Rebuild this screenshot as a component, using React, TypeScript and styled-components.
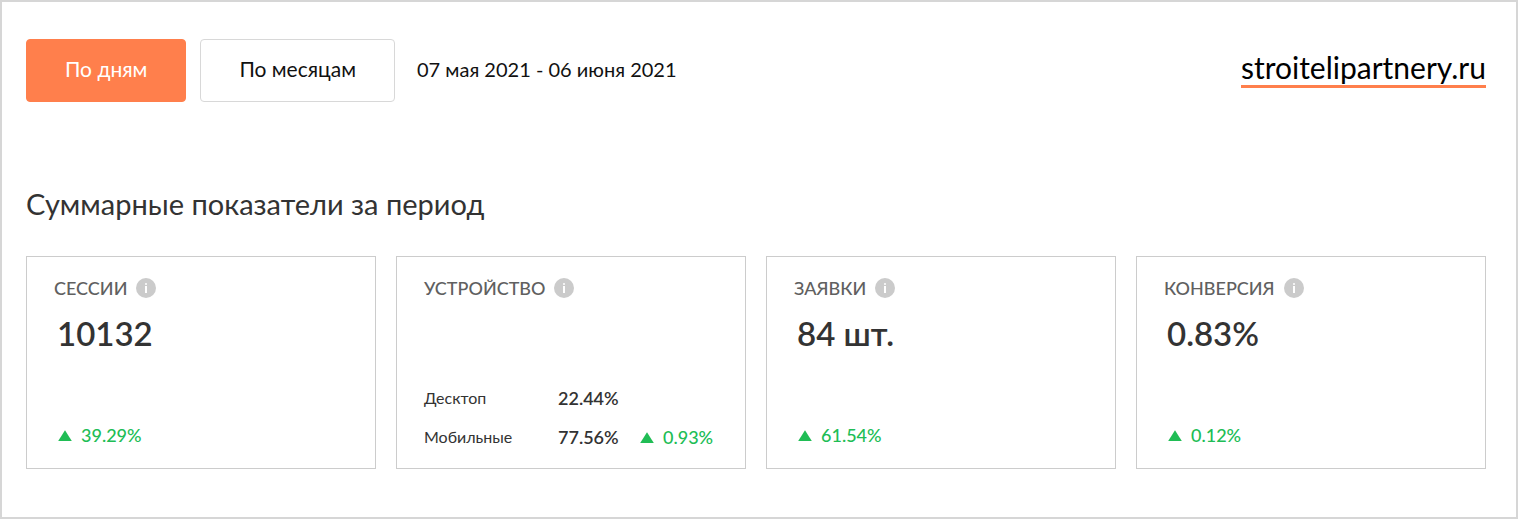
import React, { useState } from "react";
import styled, { createGlobalStyle } from "styled-components";

const GlobalStyle = createGlobalStyle`
  *, *::before, *::after { box-sizing: border-box; }
  body {
    margin: 0;
    background: #ffffff;
    color: #333333;
    font-family: Lato, "Open Sans", sans-serif;
  }
`;

const Page = styled.main`
  border: 2px solid #d6d6d6;
  padding: 37px 30px 48px 24px;
`;

const Toolbar = styled.header`
  display: flex;
  align-items: center;
  justify-content: space-between;
  gap: 20px;
`;

const Period = styled.div`
  display: flex;
  align-items: center;
  gap: 14px;
`;

const PeriodButton = styled.button<{ $active: boolean }>`
  height: 63px;
  padding: 0 38px 4px;
  border: 1px solid ${(p) => (p.$active ? "#ff7f4c" : "#d8d8d8")};
  border-radius: 4px;
  background: ${(p) => (p.$active ? "#ff7f4c" : "#ffffff")};
  color: ${(p) => (p.$active ? "#ffffff" : "#111111")};
  font: inherit;
  font-size: 21px;
  cursor: pointer;
`;

const Dates = styled.span`
  padding: 0 8px 4px;
  color: #111111;
  font-size: 20px;
`;

const SiteLink = styled.a`
  margin-bottom: 4px;
  border-bottom: 3px solid #ff7f4c;
  color: #000000;
  font-size: 30px;
  line-height: 36px;
  text-decoration: none;
`;

const Heading = styled.h2`
  margin: 82px 0 32px;
  font-size: 29px;
  font-weight: 400;
  line-height: 40px;
`;

const Cards = styled.section`
  display: grid;
  grid-template-columns: repeat(4, minmax(0, 1fr));
  gap: 20px;
`;

const Card = styled.article`
  display: flex;
  flex-direction: column;
  min-height: 213px;
  padding: 19px 27px;
  border: 1px solid #cccccc;
`;

const CardTitle = styled.h3`
  display: flex;
  align-items: center;
  gap: 9px;
  margin: 0;
  color: #606060;
  font-size: 18px;
  font-weight: 500;
  line-height: 24px;
  text-transform: uppercase;
`;

const Value = styled.strong`
  margin: 13px 3px 0;
  font-size: 33px;
  font-weight: 600;
  line-height: 40px;
`;

const Footer = styled.div`
  margin: auto 4px 0;
  padding-bottom: 2px;
`;

const Trend = styled.span`
  display: flex;
  align-items: center;
  gap: 9px;
  color: #20bd55;
  font-size: 18px;
  font-weight: 500;
  line-height: 24px;
`;

const Devices = styled.table`
  margin-top: auto;
  border-collapse: collapse;
  font-size: 18px;
  line-height: 24px;
`;

const DeviceRow = styled.tr`
  & + & > * { padding-top: 15px; }
`;

const DeviceName = styled.th`
  width: 134px;
  padding: 0;
  font-size: 16px;
  font-weight: 400;
  text-align: left;
`;

const DeviceCell = styled.td<{ $strong?: boolean }>`
  padding: 0;
  width: ${(p) => (p.$strong ? "82px" : "auto")};
  font-weight: ${(p) => (p.$strong ? 600 : 400)};
`;

const InfoIcon = () => (
  <svg width="20" height="20" viewBox="0 0 20 20" aria-hidden="true">
    <circle cx="10" cy="10" r="10" fill="#cbcbcb" />
    <rect x="9" y="5" width="2" height="2" rx="1" fill="#ffffff" />
    <rect x="9" y="8" width="2" height="7" fill="#ffffff" />
  </svg>
);

const Growth = ({ children }: { children: string }) => (
  <Trend>
    <svg width="14" height="11" viewBox="0 0 14 11" aria-hidden="true">
      <path d="M7 0.3 13.8 11H0.2Z" fill="#20bd55" />
    </svg>
    {children}
  </Trend>
);

const Metric = ({ title, value, growth }: { title: string; value: string; growth: string }) => (
  <Card>
    <CardTitle>{title}<InfoIcon /></CardTitle>
    <Value>{value}</Value>
    <Footer><Growth>{growth}</Growth></Footer>
  </Card>
);

export default function App() {
  const [mode, setMode] = useState<"days" | "months">("days");

  return (
    <>
      <GlobalStyle />
      <Page>
        <Toolbar>
          <Period>
            <PeriodButton type="button" $active={mode === "days"} onClick={() => setMode("days")}>
              По дням
            </PeriodButton>
            <PeriodButton type="button" $active={mode === "months"} onClick={() => setMode("months")}>
              По месяцам
            </PeriodButton>
            <Dates>07 мая 2021 - 06 июня 2021</Dates>
          </Period>
          <SiteLink href="#site">stroitelipartnery.ru</SiteLink>
        </Toolbar>
        <Heading>Суммарные показатели за период</Heading>
        <Cards>
          <Metric title="Сессии" value="10132" growth="39.29%" />
          <Card>
            <CardTitle>Устройство<InfoIcon /></CardTitle>
            <Devices>
              <tbody>
                <DeviceRow>
                  <DeviceName scope="row">Десктоп</DeviceName>
                  <DeviceCell $strong>22.44%</DeviceCell>
                  <DeviceCell />
                </DeviceRow>
                <DeviceRow>
                  <DeviceName scope="row">Мобильные</DeviceName>
                  <DeviceCell $strong>77.56%</DeviceCell>
                  <DeviceCell><Growth>0.93%</Growth></DeviceCell>
                </DeviceRow>
              </tbody>
            </Devices>
          </Card>
          <Metric title="Заявки" value="84 шт." growth="61.54%" />
          <Metric title="Конверсия" value="0.83%" growth="0.12%" />
        </Cards>
      </Page>
    </>
  );
}
